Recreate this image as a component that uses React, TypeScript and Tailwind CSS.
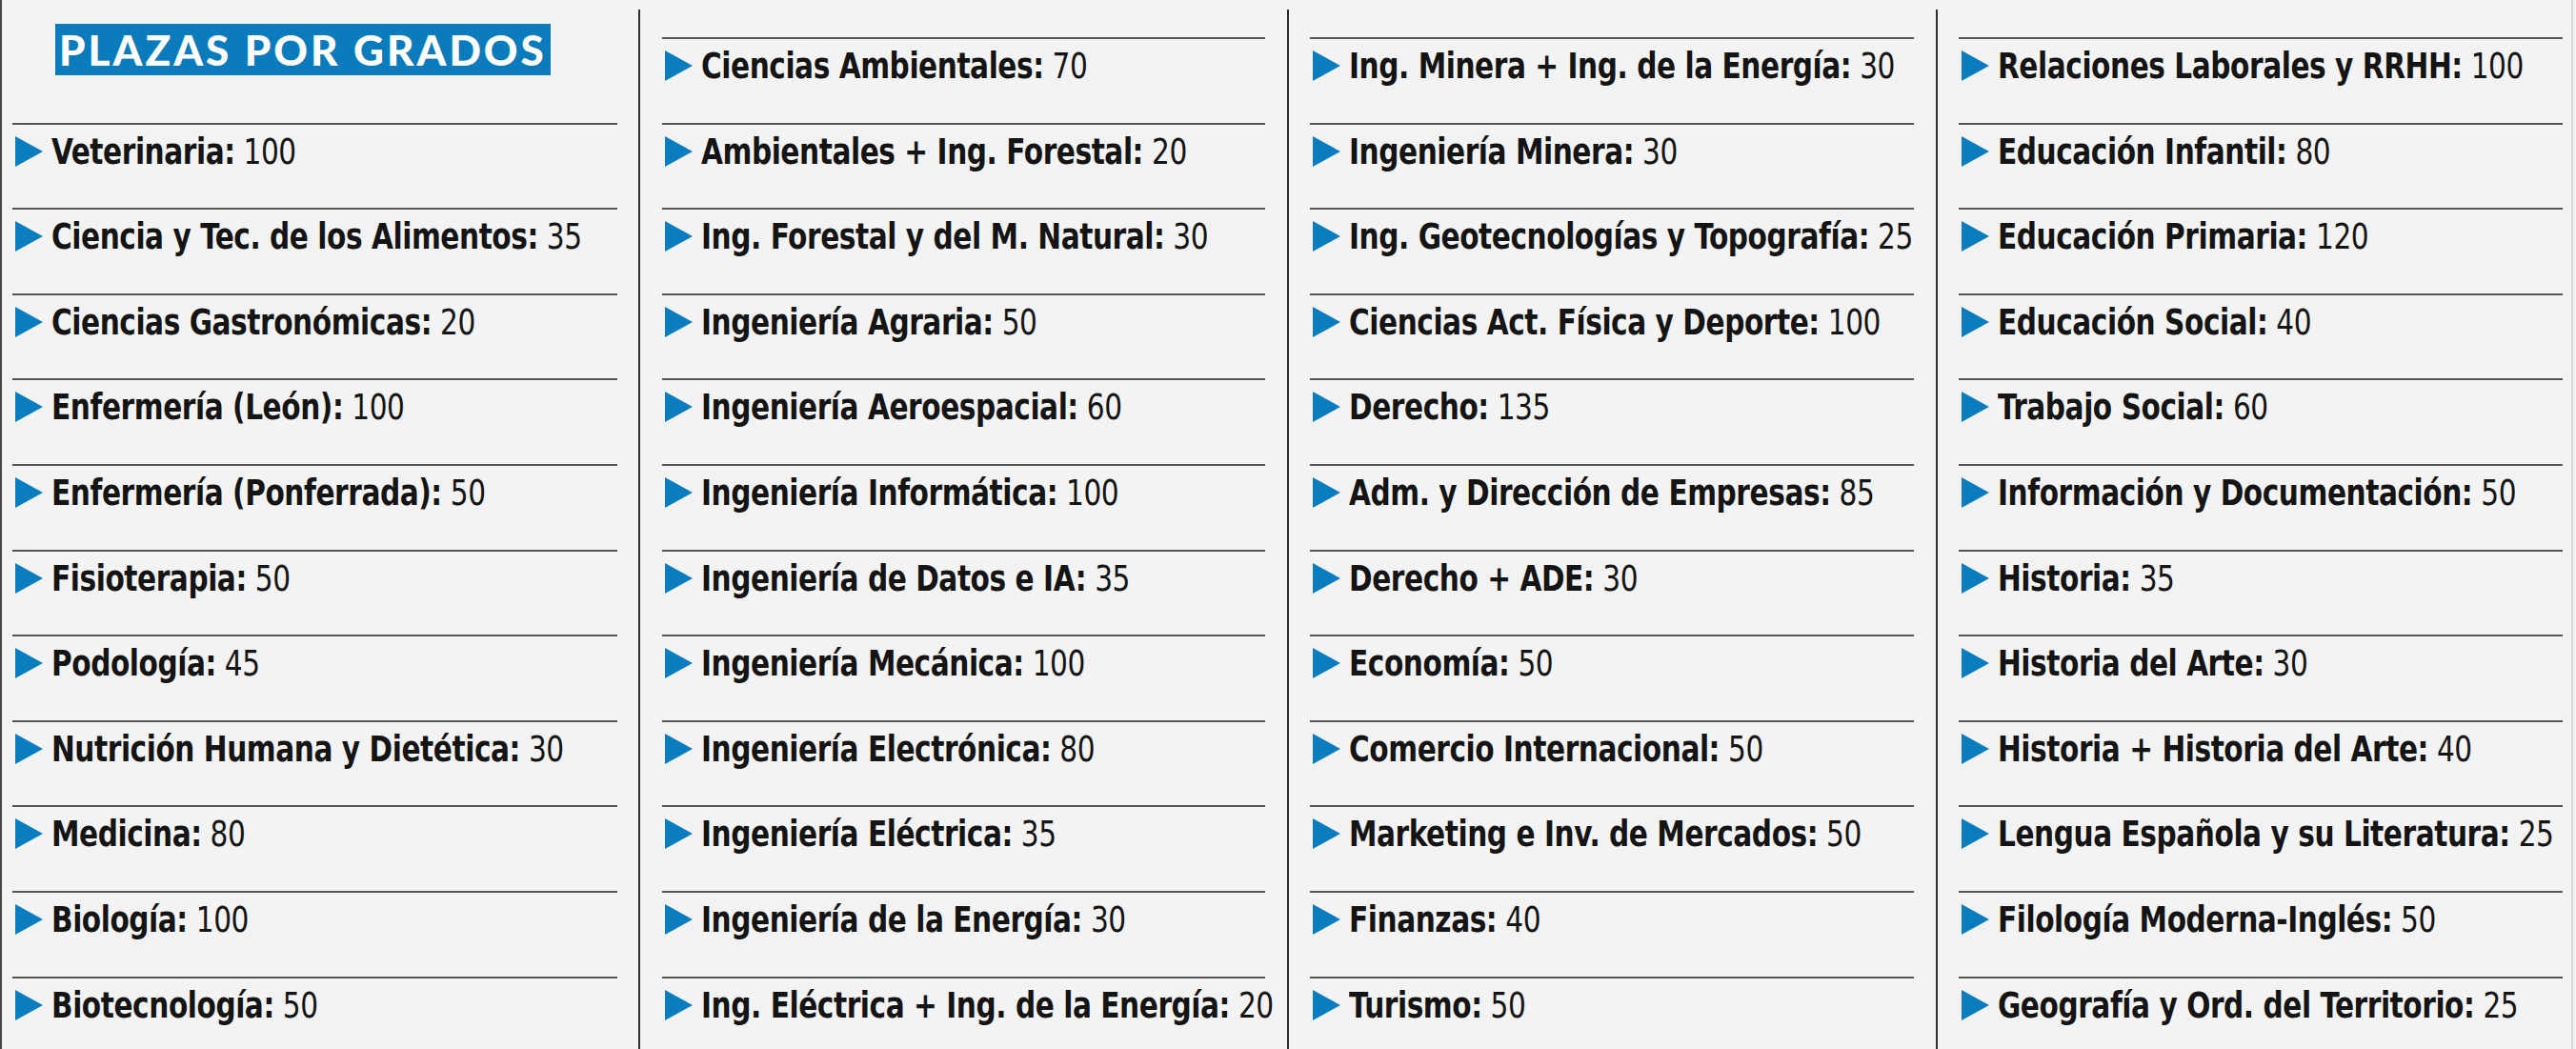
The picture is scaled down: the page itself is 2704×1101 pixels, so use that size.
import React from "react";

type Item = [string, string];

const col1: Item[] = [
  ["Veterinaria:", "100"],
  ["Ciencia y Tec. de los Alimentos:", "35"],
  ["Ciencias Gastronómicas:", "20"],
  ["Enfermería (León):", "100"],
  ["Enfermería (Ponferrada):", "50"],
  ["Fisioterapia:", "50"],
  ["Podología:", "45"],
  ["Nutrición Humana y Dietética:", "30"],
  ["Medicina:", "80"],
  ["Biología:", "100"],
  ["Biotecnología:", "50"],
];

const col2: Item[] = [
  ["Ciencias Ambientales:", "70"],
  ["Ambientales + Ing. Forestal:", "20"],
  ["Ing. Forestal y del M. Natural:", "30"],
  ["Ingeniería Agraria:", "50"],
  ["Ingeniería Aeroespacial:", "60"],
  ["Ingeniería Informática:", "100"],
  ["Ingeniería de Datos e IA:", "35"],
  ["Ingeniería Mecánica:", "100"],
  ["Ingeniería Electrónica:", "80"],
  ["Ingeniería Eléctrica:", "35"],
  ["Ingeniería de la Energía:", "30"],
  ["Ing. Eléctrica + Ing. de la Energía:", "20"],
];

const col3: Item[] = [
  ["Ing. Minera + Ing. de la Energía:", "30"],
  ["Ingeniería Minera:", "30"],
  ["Ing. Geotecnologías y Topografía:", "25"],
  ["Ciencias Act. Física y Deporte:", "100"],
  ["Derecho:", "135"],
  ["Adm. y Dirección de Empresas:", "85"],
  ["Derecho + ADE:", "30"],
  ["Economía:", "50"],
  ["Comercio Internacional:", "50"],
  ["Marketing e Inv. de Mercados:", "50"],
  ["Finanzas:", "40"],
  ["Turismo:", "50"],
];

const col4: Item[] = [
  ["Relaciones Laborales y RRHH:", "100"],
  ["Educación Infantil:", "80"],
  ["Educación Primaria:", "120"],
  ["Educación Social:", "40"],
  ["Trabajo Social:", "60"],
  ["Información y Documentación:", "50"],
  ["Historia:", "35"],
  ["Historia del Arte:", "30"],
  ["Historia + Historia del Arte:", "40"],
  ["Lengua Española y su Literatura:", "25"],
  ["Filología Moderna-Inglés:", "50"],
  ["Geografía y Ord. del Territorio:", "25"],
];

function Triangle() {
  return (
    <svg width="29" height="32" viewBox="0 0 29 32" className="shrink-0 mt-[12px]">
      <polygon points="0,0 29,16 0,32" fill="#0b7dbf" />
    </svg>
  );
}

function Row({ item }: { item: Item }) {
  return (
    <div className="h-[89.6px] shrink-0 border-t-2 border-[#555555] flex items-start pl-[3px]">
      <Triangle />
      <div
        className="ml-[9px] mt-[10px] text-[37px] leading-[37px] text-[#141414] whitespace-nowrap tracking-[-0.5px] scale-x-[0.89] origin-left"
        style={{ fontFamily: '"DejaVu Sans Condensed", "DejaVu Sans", sans-serif', fontStretch: "condensed" }}
      >
        <span className="font-bold">{item[0]}</span>{" "}
        <span className="font-normal">{item[1]}</span>
      </div>
    </div>
  );
}

function Column({ items, className }: { items: Item[]; className: string }) {
  return (
    <div className={"shrink-0 flex flex-col " + className}>
      {items.map((it, i) => (
        <Row key={i} item={it} />
      ))}
    </div>
  );
}

function Divider() {
  return <div className="w-[2px] shrink-0 bg-[#2e2e2e] mt-[10px]" />;
}

export default function App() {
  return (
    <div className="w-[2704px] h-[1101px] bg-[#f3f3f3] flex overflow-hidden">
      <div className="w-[2px] shrink-0 bg-[#444444]" />
      <div className="w-[668px] shrink-0 pl-[11px] pr-[22px] pt-[25px] flex flex-col">
        <div className="h-[103.6px] shrink-0 pl-[45px]">
          <div
            className="inline-block bg-[#0b7bbb] text-white text-[44px] leading-[54px] h-[54px] px-[4px] tracking-[3px] font-black"
            style={{ fontFamily: 'Lato, "Liberation Sans", sans-serif' }}
          >
            PLAZAS POR GRADOS
          </div>
        </div>
        {col1.map((it, i) => (
          <Row key={i} item={it} />
        ))}
      </div>
      <Divider />
      <Column items={col2} className="w-[679px] pl-[23px] pr-[23px] pt-[39px]" />
      <Divider />
      <Column items={col3} className="w-[679px] pl-[22px] pr-[23px] pt-[39px]" />
      <Divider />
      <Column items={col4} className="w-[665px] pl-[22px] pr-[9px] pt-[39px]" />
      <div className="w-[2px] shrink-0 bg-[#d6d6d6]" />
    </div>
  );
}
